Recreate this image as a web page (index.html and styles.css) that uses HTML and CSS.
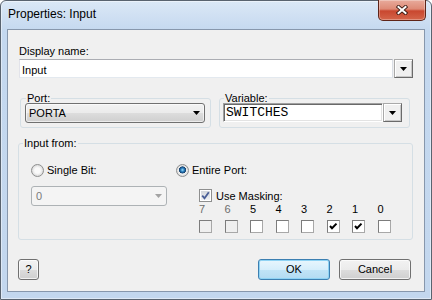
FILE: index.html
```html
<!DOCTYPE html>
<html lang="en">
<head>
<meta charset="UTF-8">
<title>Properties: Input</title>
<link rel="stylesheet" href="styles.css">
</head>
<body>

<div class="window">
  <div class="titlebar">
    <span class="title">Properties: Input</span>
    <div class="close-btn">
      <svg width="12" height="10" viewBox="0 0 12 10">
        <path d="M2.5 2L9.5 8M9.5 2L2.5 8" stroke="#3b1a12" stroke-width="3.8" stroke-linecap="square"/>
        <path d="M2.5 2L9.5 8M9.5 2L2.5 8" stroke="#fff" stroke-width="2" stroke-linecap="square"/>
      </svg>
    </div>
  </div>

  <div class="client">
    <div class="field-label">Display name:</div>
    <div class="name-row">
      <div class="textbox">Input</div>
      <div class="drop-btn"><svg width="7" height="4"><path d="M0 0h7L3.5 4z"/></svg></div>
    </div>

    <div class="group-row">
      <fieldset class="group group-port">
        <legend>Port:</legend>
        <div class="dropdown">
          <span>PORTA</span>
          <svg width="7" height="4"><path d="M0 0h7L3.5 4z"/></svg>
        </div>
      </fieldset>
      <fieldset class="group group-var">
        <legend>Variable:</legend>
        <div class="combo">
          <div class="sunken">SWITCHES</div>
          <div class="drop-btn"><svg width="7" height="4"><path d="M0 0h7L3.5 4z"/></svg></div>
        </div>
      </fieldset>
    </div>

    <fieldset class="group group-input">
      <legend>Input from:</legend>
      <div class="input-cols">
        <div class="col">
          <div class="radio-row"><span class="radio"></span>Single Bit:</div>
          <div class="dropdown disabled">
            <span>0</span>
            <svg width="7" height="4"><path d="M0 0h7L3.5 4z"/></svg>
          </div>
        </div>
        <div class="col">
          <div class="radio-row"><span class="radio checked"></span>Entire Port:</div>
          <div class="check-row">
            <span class="checkbox">
              <svg width="9" height="9" viewBox="0 0 9 9"><path d="M1.2 4.6L3.5 7.2L7.8 1.2" fill="none" stroke="#4a5f97" stroke-width="1.8"/></svg>
            </span>
            Use Masking:
          </div>
          <div class="bits">
            <span class="bit-label off">7</span>
            <span class="bit-label off">6</span>
            <span class="bit-label">5</span>
            <span class="bit-label">4</span>
            <span class="bit-label">3</span>
            <span class="bit-label">2</span>
            <span class="bit-label">1</span>
            <span class="bit-label">0</span>
            <span class="bit-box off"></span>
            <span class="bit-box off"></span>
            <span class="bit-box"></span>
            <span class="bit-box"></span>
            <span class="bit-box"></span>
            <span class="bit-box"><svg width="11" height="11" viewBox="0 0 11 11"><path d="M2 5L4 7.2L8.5 2.6" fill="none" stroke="#000" stroke-width="2"/></svg></span>
            <span class="bit-box"><svg width="11" height="11" viewBox="0 0 11 11"><path d="M2 5L4 7.2L8.5 2.6" fill="none" stroke="#000" stroke-width="2"/></svg></span>
            <span class="bit-box"></span>
          </div>
        </div>
      </div>
    </fieldset>

    <div class="button-row">
      <button class="btn btn-help">?</button>
      <button class="btn btn-default">OK</button>
      <button class="btn">Cancel</button>
    </div>
  </div>
</div>

</body>
</html>
```

FILE: styles.css
```css
* { box-sizing: border-box; }

body {
  margin: 0;
  width: 432px; height: 300px;
  overflow: hidden;
  font-family: "Liberation Sans", Arial, sans-serif;
  font-size: 11px;
  color: #000;
  background: #fff;
}

/* Рамка окна */
.window {
  width: 432px; height: 300px;
  border: 1px solid #59636f;
  border-radius: 6px 6px 0 0;
  background: linear-gradient(#dbe8f6, #c4d8ef 30px, #c3d7ee);
  box-shadow: inset 0 0 0 1px rgba(255,255,255,0.45);
  padding: 0 6px 7px;
  display: flex;
  flex-direction: column;
}
.titlebar {
  height: 28px;
  display: flex;
  align-items: flex-start;
}
.title {
  font-size: 12px;
  line-height: 14px;
  margin: 6px 0 0 1px;
}
.close-btn {
  margin: -1px -1px 0 auto;
  width: 48px; height: 21px;
  border: 1px solid #5e2418;
  border-top: none;
  border-radius: 0 0 5px 5px;
  background: linear-gradient(#e8ab9c, #de8a76 45%, #c9472f 55%, #d4654a);
  box-shadow: inset 0 0 0 1px rgba(255,255,255,0.3);
  display: flex;
  justify-content: center;
  align-items: center;
}

/* Клиентская область */
.client {
  flex: 1;
  background: #f0f0f0;
  border: 1px solid #8797ac;
  padding: 0 11px;
}
.field-label {
  line-height: 13px;
  margin-top: 15px;
}
.name-row {
  display: flex;
  margin-top: 1px;
  height: 19px;
}
.textbox {
  width: 374px;
  margin-right: 1px;
  background: #fff;
  border: 1px solid;
  border-color: #abadb3 #dbdfe6 #e3e9ef #e2e3ea;
  padding: 3px 2px 0;
  line-height: 14px;
}
.drop-btn {
  width: 19px; height: 19px;
  background: #f0f0f0;
  border: 1px solid;
  border-color: #a9a9a9 #6a6a6a #6a6a6a #a9a9a9;
  box-shadow: inset 1px 1px 0 #fff, inset -1px -1px 0 #c8c8c8;
  display: flex;
  justify-content: center;
  align-items: center;
}
.drop-btn svg { display: block; }

/* Группы */
.group {
  margin: 0;
  border: 1px solid #d5dfe5;
  border-radius: 3px;
  min-width: 0;
}
.group legend {
  padding: 0 1px;
  margin-left: 1px;
  line-height: 10px;
}
.group-row {
  display: grid;
  grid-template-columns: 191px 191px;
  column-gap: 8px;
  margin: 15px 0 0 1px;
}
.group-port { padding: 0 5px 4px 4px; }
.group-var { padding: 0 6px 5px 3px; }

.dropdown {
  height: 20px;
  border: 1px solid #707070;
  border-radius: 3px;
  background: linear-gradient(#f2f2f2, #ebebeb 50%, #dddddd 51%, #cfcfcf);
  box-shadow: inset 0 0 0 1px rgba(255,255,255,0.6);
  display: flex;
  align-items: center;
  justify-content: space-between;
  padding: 0 4px 0 3px;
  line-height: 18px;
}
.dropdown.disabled {
  border-color: #adb2b5;
  background: #f4f4f4;
  box-shadow: none;
  color: #7a7a7a;
  padding-left: 4px;
}
.dropdown.disabled svg { fill: #a3a3a3; }

.combo {
  display: flex;
  height: 19px;
}
.sunken {
  width: 160px;
  background: #fff;
  border: 1px solid;
  border-color: #a0a0a0 #fff #fff #a0a0a0;
  box-shadow: inset 1px 1px 0 #696969, inset -1px -1px 0 #e3e3e3;
  font-family: "Liberation Mono", "Courier New", monospace;
  font-size: 13px;
  line-height: 16px;
  padding: 1px 0 0 2px;
}

.group-input {
  margin: 10px 0 0 -1px;
  width: 395px;
  padding: 0 8px 6px 3px;
}
.input-cols {
  display: grid;
  grid-template-columns: 145px 1fr;
  margin: 16px 0 0 9px;
}
.radio-row {
  display: flex;
  align-items: center;
  gap: 3px;
  height: 13px;
  line-height: 13px;
}
.radio {
  width: 13px; height: 13px;
  border: 1px solid #8e8f8f;
  border-radius: 50%;
  background: radial-gradient(circle, #fafafa 35%, #d9d9d9 75%);
}
.radio.checked {
  background:
    radial-gradient(circle at 50% 45%, #9fe0fb 0, #2a7dbd 1.8px, #143f6c 3.3px, transparent 3.8px),
    radial-gradient(circle, #fafafa 35%, #d9d9d9 75%);
}
.col .dropdown { width: 136px; margin-top: 9px; }

.check-row {
  display: flex;
  align-items: center;
  gap: 4px;
  height: 13px;
  margin: 12px 0 0 23px;
}
.checkbox {
  width: 13px; height: 13px;
  border: 1px solid #8e8f8f;
  background: linear-gradient(#cfd3d9, #f4f5f6);
  box-shadow: inset 0 0 0 1px #fff;
  display: flex;
  justify-content: center;
  align-items: center;
}

.bits {
  display: grid;
  grid-template-columns: repeat(8, 25.5px);
  grid-template-rows: 13px 13px;
  row-gap: 4px;
  margin: 1px 0 0 23px;
  line-height: 13px;
}
.bit-label.off { color: #6d6d6d; }
.bit-box {
  width: 13px; height: 13px;
  border: 1px solid;
  border-color: #7c7c7c #a8a8a8 #a8a8a8 #7c7c7c;
  background: #fff;
}
.bit-box.off { background: #efefef; }
.bit-box svg { display: block; }

/* Кнопки */
.button-row {
  display: flex;
  margin: 19px 2px 0 -1px;
}
.btn {
  font: inherit;
  color: #000;
  width: 72px; height: 21px;
  padding: 0;
  line-height: 19px;
  border: 1px solid #707070;
  border-radius: 3px;
  background: linear-gradient(#f2f2f2, #ebebeb 50%, #dddddd 51%, #cfcfcf);
  box-shadow: inset 0 0 0 1px rgba(255,255,255,0.7);
}
.btn + .btn { margin-left: 9px; }
.btn-help { width: 21px; margin-right: auto; }
.btn-default {
  border-color: #3c7fb1;
  background: linear-gradient(#e8f6fd, #d6eefb 50%, #c1e4f7 51%, #b2dbf2);
  box-shadow: inset 0 0 0 1px #8fd3f4;
}
```
